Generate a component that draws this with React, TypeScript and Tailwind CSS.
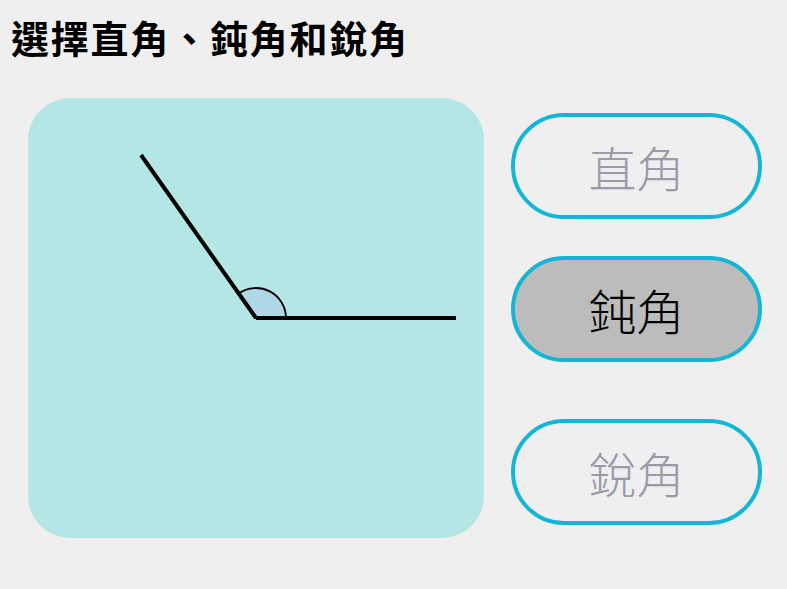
import React from 'react';

const options = [
  { label: '直角', selected: false, mt: 'mt-[15px]' },
  { label: '鈍角', selected: true, mt: 'mt-[37px]' },
  { label: '銳角', selected: false, mt: 'mt-[57px]' },
];

export default function App() {
  return (
    <div
      className="w-[787px] h-[589px] bg-[#efefef] overflow-hidden"
      style={{ fontFamily: '"Noto Sans CJK TC", "Noto Sans", sans-serif' }}
    >
      <h1 className="pl-[11px] pt-[12px] text-[38px] leading-[50px] font-bold text-black tracking-[1.8px]">
        選擇直角、鈍角和銳角
      </h1>
      <div className="flex gap-[27px] pl-[28px] mt-[36px]">
        <div className="w-[456px] h-[440px] rounded-[42px] bg-[#b4e6e5]">
          <svg width="456" height="440" viewBox="0 0 456 440">
            <path
              d="M228 220 L258 220 A30 30 0 0 0 210.7 195.5 Z"
              fill="#add8e6"
              stroke="#000"
              strokeWidth="1.8"
            />
            <line x1="228" y1="220" x2="113" y2="57" stroke="#000" strokeWidth="4" />
            <line x1="228" y1="220" x2="428" y2="220" stroke="#000" strokeWidth="4" />
          </svg>
        </div>
        <div className="flex flex-col">
          {options.map((o) => (
            <button
              key={o.label}
              className={`${o.mt} w-[251px] h-[106px] rounded-full border-4 border-[#13b6d4] flex items-center justify-center text-[48px] font-light ${
                o.selected ? 'bg-[#bcbcbc] text-black' : 'bg-[#efefef] text-[#9b9aa8]'
              }`}
            >
              {o.label}
            </button>
          ))}
        </div>
      </div>
    </div>
  );
}
